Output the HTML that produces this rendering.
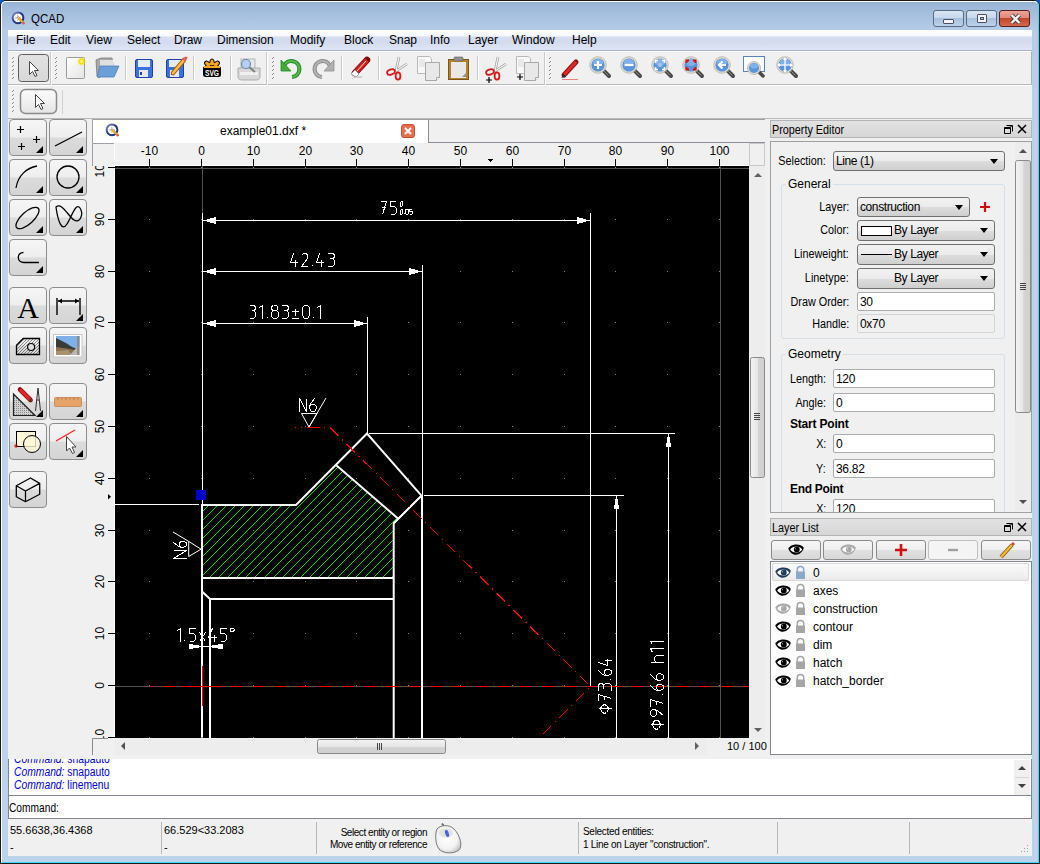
<!DOCTYPE html><html><head><meta charset="utf-8"><style>
*{box-sizing:border-box}
html,body{margin:0;padding:0;width:1040px;height:864px;overflow:hidden;background:#000}
body{font-family:"Liberation Sans",sans-serif;font-size:12px;color:#000;position:relative}
.a{position:absolute}
svg{overflow:hidden}
.menu span{position:absolute;top:3px;font-size:12px}
.btn{position:absolute;width:38px;height:37px;border:1px solid #8c8c8c;border-radius:4px;background:linear-gradient(#f6f6f6 0,#eeeeee 48%,#dcdcdc 52%,#d4d4d4 100%)}
.btn svg{position:absolute;left:0;top:0}
.tri{position:absolute;width:0;height:0;border-left:9px solid transparent;border-bottom:9px solid #000;right:3px;bottom:3px}
.hdl{position:absolute;width:3px;background-image:radial-gradient(circle,#9a9a9a 0.8px,transparent 1.1px);background-size:3px 3px}
.vsep{position:absolute;width:2px;border-left:1px solid #c5c5c5;border-right:1px solid #fff}
.inp{position:absolute;background:#fff;border:1px solid #abadb3;border-radius:2px;font-size:12px;padding:2px 0 0 2px;white-space:nowrap;letter-spacing:-0.3px}
.ro{background:#f0f0f0;border-color:#d4d4d4}
.cmb{position:absolute;border:1px solid #707070;border-radius:3px;background:linear-gradient(#f2f2f2 0,#ebebeb 50%,#dddddd 51%,#cfcfcf 100%);font-size:12px;padding:2px 0 0 2px;white-space:nowrap;letter-spacing:-0.4px}
.cmb:after{content:"";position:absolute;right:6px;top:7px;border-left:4px solid transparent;border-right:4px solid transparent;border-top:5px solid #000}
.lbl{position:absolute;font-size:12px;text-align:right;white-space:nowrap;transform:scaleX(.9);transform-origin:100% 0}
.t11{font-size:11px;white-space:nowrap}
.nw{white-space:nowrap}
.sx{transform-origin:0 0}
.sxr{transform-origin:100% 0}
</style></head><body>
<div class="a" style="left:0;top:0;width:1040px;height:864px;background:#0a5ccc"></div>
<div class="a" style="left:0;top:0;width:1040px;height:864px;border-radius:6px 6px 0 0;border:1px solid #1c1c1c;background:linear-gradient(#97b3d4 0,#a6c0de 14px,#b6cde8 30px,#bcd2ec 120px,#bcd3ec 864px)"></div>
<div class="a" style="left:1px;top:1px;width:1038px;height:862px;border-radius:5px 5px 0 0;border-left:1px solid #fff;border-top:1px solid #fff;border-right:1px solid #3ad8f4;border-bottom:1px solid #3ad8f4"></div>
<svg class="a" style="left:10px;top:10px" width="16" height="16" viewBox="0 0 16 16"><defs><linearGradient id="qr" x1="0" y1="0" x2="1" y2="1"><stop offset="0" stop-color="#8a9cc8"/><stop offset=".45" stop-color="#22388a"/><stop offset="1" stop-color="#1a2e7a"/></linearGradient></defs><circle cx="8" cy="7.8" r="5.4" fill="#fff" stroke="url(#qr)" stroke-width="2"/><path d="M4.5 7.5H11M7.5 4.5V11" stroke="#b0b0b0" stroke-width=".6"/><path d="M5 9.5L9 6" stroke="#e07070" stroke-width=".6"/><path d="M8.5 8L13 12.5" stroke="#c87a10" stroke-width="2.4"/><path d="M8.5 8L12.8 12.3" stroke="#f8c030" stroke-width="1.2"/><circle cx="13.6" cy="13.2" r="1.3" fill="#e05858"/></svg>
<div class="a sx" style="left:31px;top:12px;font-size:12.5px;color:#000;transform:scaleX(.92)">QCAD</div>
<div style="position:absolute;top:10px;height:17px;border:1px solid #5a6a80;border-radius:3px;left:933px;width:31px;background:linear-gradient(#d8e5f3 0,#c7d9ee 45%,#a9c0dd 50%,#bcd2ea 100%)"><div class="a" style="left:9px;top:8px;width:11px;height:5px;background:#f4f4f4;border:1px solid #4a5060;border-radius:1px"></div></div>
<div style="position:absolute;top:10px;height:17px;border:1px solid #5a6a80;border-radius:3px;left:966px;width:31px;background:linear-gradient(#d8e5f3 0,#c7d9ee 45%,#a9c0dd 50%,#bcd2ea 100%)"><div class="a" style="left:10px;top:3px;width:10px;height:9px;background:#f4f4f4;border:1px solid #4a5060;border-radius:1px"></div><div class="a" style="left:13px;top:6px;width:4px;height:3px;background:#a9c0dd;border:1px solid #4a5060"></div></div>
<div style="position:absolute;top:10px;height:17px;border:1px solid #5a6a80;border-radius:3px;left:999px;width:31px;border-color:#5a1e1e;background:linear-gradient(#eba598 0,#e08a78 45%,#c2462c 50%,#d66a4c 100%)"><svg class="a" style="left:9px;top:2px" width="13" height="12" viewBox="0 0 13 12"><path d="M2.5 2L10.5 10M10.5 2L2.5 10" stroke="#3a3a4a" stroke-width="4"/><path d="M2.5 2L10.5 10M10.5 2L2.5 10" stroke="#f4f4f4" stroke-width="2.4"/></svg></div>
<div class="a" style="left:8px;top:30px;width:1024px;height:826px;background:#f0f0f0"></div>
<div class="a menu" style="left:8px;top:30px;width:1024px;height:21px;background:linear-gradient(#ffffff 0,#f7f9fd 28%,#d6ddf0 36%,#d3dbef 60%,#dfe5f4 100%);border-bottom:1px solid #a8b0c4">
<span style="left:8px">File</span>
<span style="left:42px">Edit</span>
<span style="left:78px">View</span>
<span style="left:119px">Select</span>
<span style="left:166px">Draw</span>
<span style="left:209px">Dimension</span>
<span style="left:282px">Modify</span>
<span style="left:336px">Block</span>
<span style="left:381px">Snap</span>
<span style="left:422px">Info</span>
<span style="left:460px">Layer</span>
<span style="left:504px">Window</span>
<span style="left:564px">Help</span>
</div>
<div class="a" style="left:8px;top:51px;width:1024px;height:34px;background:#f0f0f0;border-top:1px solid #fff;border-bottom:1px solid #b8b8b8;border-right:1px solid #b0b0b0"></div>
<div class="a" style="left:8px;top:85px;width:1024px;height:34px;background:#f0f0f0;border-top:1px solid #fff;border-bottom:1px solid #b8b8b8"></div>
<svg class="a" style="left:0;top:51px" width="1040" height="68" viewBox="0 51 1040 68">
<defs><linearGradient id="gpress" x1="0" x2="0" y1="0" y2="1"><stop offset="0" stop-color="#e2e2e2"/><stop offset="1" stop-color="#d8d8d8"/></linearGradient><linearGradient id="gbtn" x1="0" x2="0" y1="0" y2="1"><stop offset="0" stop-color="#fbfbfb"/><stop offset=".5" stop-color="#f1f1f1"/><stop offset="1" stop-color="#e4e4e4"/></linearGradient><linearGradient id="gpage" x1="0" x2="1" y1="0" y2="1"><stop offset="0" stop-color="#ffffff"/><stop offset="1" stop-color="#e4e4e4"/></linearGradient><radialGradient id="gstar"><stop offset="0" stop-color="#ffffa0"/><stop offset=".5" stop-color="#f0e000"/><stop offset="1" stop-color="#f0e000" stop-opacity="0"/></radialGradient></defs>
<path d="M13 57h1v1h-1zM12 58h1v1h-1zM13 61h1v1h-1zM12 62h1v1h-1zM13 65h1v1h-1zM12 66h1v1h-1zM13 69h1v1h-1zM12 70h1v1h-1zM13 73h1v1h-1zM12 74h1v1h-1zM13 77h1v1h-1zM12 78h1v1h-1z" fill="#8a8a8a"/>
<rect x="18.5" y="54.5" width="30" height="27" rx="3" fill="url(#gpress)" stroke="#5e5e5e"/>
<path d="M29.5 61.5V74.5L32.5 71.5L35 76.5L37 75.5L34.5 70.5H38.5Z" fill="#fff" stroke="#444" stroke-width="1"/>
<path d="M50.5 52V85" stroke="#c8c8c8"/><path d="M51.5 52V85" stroke="#fff"/>
<path d="M56 57h1v1h-1zM55 58h1v1h-1zM56 61h1v1h-1zM55 62h1v1h-1zM56 65h1v1h-1zM55 66h1v1h-1zM56 69h1v1h-1zM55 70h1v1h-1zM56 73h1v1h-1zM55 74h1v1h-1zM56 77h1v1h-1zM55 78h1v1h-1z" fill="#8a8a8a"/>
<rect x="66.5" y="57.5" width="18" height="21" rx="1" fill="url(#gpage)" stroke="#9a9a9a"/>
<circle cx="81.5" cy="61.5" r="4.5" fill="url(#gstar)"/>
<path d="M96 60L101 58H112L113 65L99 78L97 76Z" fill="#a8a8a8" stroke="#7a7a7a" stroke-width=".8"/>
<path d="M100 60H113V66H100Z" fill="#e0e0e0"/>
<path d="M100 66H119L114 77H97Z" fill="#6a9fd8" stroke="#4f7fb8" stroke-width=".8"/>
<path d="M125.5 56V80" stroke="#c8c8c8"/><path d="M126.5 56V80" stroke="#fff"/>
<rect x="135.5" y="59.5" width="17" height="18" rx="1.5" fill="#3a73e0" stroke="#1f3fb0"/>
<rect x="138" y="60" width="12" height="7" fill="#e4ecfa"/>
<rect x="139" y="70" width="9" height="7" fill="#e8e8e8"/><rect x="140" y="72" width="2" height="3" fill="#1f3fb0"/>
<rect x="166.5" y="59.5" width="17" height="18" rx="1.5" fill="#3a73e0" stroke="#1f3fb0"/>
<rect x="169" y="60" width="12" height="7" fill="#e4ecfa"/>
<rect x="170" y="70" width="9" height="7" fill="#e8e8e8"/><rect x="171" y="72" width="2" height="3" fill="#1f3fb0"/>
<path d="M173 73L184 60" stroke="#b05a10" stroke-width="4.5" stroke-linecap="round"/><path d="M173 73L184 60" stroke="#f8c040" stroke-width="2.6" stroke-linecap="round"/><path d="M184.5 59.5L186 58" stroke="#e06060" stroke-width="3" stroke-linecap="round"/>
<path d="M193.5 56V80" stroke="#c8c8c8"/><path d="M194.5 56V80" stroke="#fff"/>
<rect x="203" y="66" width="18" height="11" rx="2.5" fill="#000"/>
<g fill="#f5a623" stroke="#000" stroke-width="1"><ellipse cx="207.5" cy="64" rx="2.2" ry="3.4" transform="rotate(-45 207.5 64)"/><ellipse cx="216.5" cy="64" rx="2.2" ry="3.4" transform="rotate(45 216.5 64)"/><ellipse cx="212" cy="62.5" rx="2.2" ry="3.6"/></g>
<path d="M208 65L212 63L216 65" stroke="#f5a623" stroke-width="2" fill="none"/>
<rect x="204" y="66" width="16" height="2" fill="#f5a623"/>
<text x="212" y="76.2" font-family="Liberation Sans" font-weight="bold" font-size="9" fill="#fff" text-anchor="middle" textLength="14" lengthAdjust="spacingAndGlyphs">SVG</text>
<path d="M230.5 56V80" stroke="#c8c8c8"/><path d="M231.5 56V80" stroke="#fff"/>
<rect x="241" y="59" width="14" height="10" fill="#e8e8e8" stroke="#a8a8a8" stroke-width=".8"/>
<path d="M238 68H260V77C260 79 258 80 256 80H242C240 80 238 79 238 77Z" fill="#d8d8d8" stroke="#a0a0a0" stroke-width=".8"/>
<rect x="240" y="72" width="18" height="3" fill="#f0f0f0"/>
<path d="M249 67L255 72" stroke="#808080" stroke-width="2"/>
<circle cx="246" cy="64" r="4.5" fill="#b8d0f0" stroke="#6a8ab0" stroke-width="1.2"/>
<path d="M266.5 52V85" stroke="#c8c8c8"/><path d="M267.5 52V85" stroke="#fff"/>
<path d="M273 57h1v1h-1zM272 58h1v1h-1zM273 61h1v1h-1zM272 62h1v1h-1zM273 65h1v1h-1zM272 66h1v1h-1zM273 69h1v1h-1zM272 70h1v1h-1zM273 73h1v1h-1zM272 74h1v1h-1zM273 77h1v1h-1zM272 78h1v1h-1z" fill="#8a8a8a"/>
<path d="M284 66A8 8 0 1 1 292 77" fill="none" stroke="#1f8a2a" stroke-width="4.2"/>
<path d="M284 66A8 8 0 1 1 292 77" fill="none" stroke="#58b848" stroke-width="2"/>
<path d="M281 60V71H291Z" fill="#48a838" stroke="#1f8a2a" stroke-width=".8"/>
<path d="M330 66A8 8 0 1 0 322 77" fill="none" stroke="#8a8a8a" stroke-width="4.2"/>
<path d="M330 66A8 8 0 1 0 322 77" fill="none" stroke="#b4b4b4" stroke-width="2"/>
<path d="M334 60V71H324Z" fill="#b0b0b0" stroke="#909090" stroke-width=".8"/>
<path d="M341.5 56V80" stroke="#c8c8c8"/><path d="M342.5 56V80" stroke="#fff"/>
<path d="M355 73L367 60" stroke="#7a0a0a" stroke-width="6.5" stroke-linecap="round"/>
<path d="M355 73L367 60" stroke="#d42020" stroke-width="4.8" stroke-linecap="butt"/>
<path d="M357 71L366 61" stroke="#ffd8d8" stroke-width="1"/>
<path d="M351 74L355 70L359 74L356 77Z" fill="#fff" stroke="#8a8a8a" stroke-width=".7"/>
<path d="M354 77H362" stroke="#b0b0b0"/>
<path d="M378.5 56V80" stroke="#c8c8c8"/><path d="M379.5 56V80" stroke="#fff"/>
<path d="M396 71L399 57M396 71L407 64" stroke="#9a9a9a" stroke-width="2.6"/><path d="M396 71L399 57M396 71L407 64" stroke="#f4f4f4" stroke-width="1.2"/><ellipse cx="391" cy="72" rx="4" ry="2.6" fill="none" stroke="#d81818" stroke-width="1.8" transform="rotate(-20 391 72)"/><ellipse cx="398" cy="76" rx="2.4" ry="3.6" fill="none" stroke="#d81818" stroke-width="1.8"/>
<path d="M417.5 56.5H429.5L431.5 58.5V73.5H417.5Z" fill="#f8f8f8" stroke="#b8b8b8"/><path d="M419 60H425M419 62H425M419 64H425M419 66H425" stroke="#c8c8c8" stroke-width=".6"/><path d="M425.5 62.5H439.5V77.5L436.5 80.5H425.5Z" fill="#e8e8e8" stroke="#a8a8a8"/><path d="M436.5 80.5V77.5H439.5" fill="#fff" stroke="#a8a8a8"/>
<rect x="448.5" y="59.5" width="20" height="20" fill="#b8802a" stroke="#7a5418"/>
<rect x="451" y="62" width="15" height="16" fill="#e8e8e8"/>
<rect x="454" y="57" width="9" height="4" rx="1" fill="#909090" stroke="#606060" stroke-width=".6"/>
<path d="M462 77L466 73V77Z" fill="#909090"/>
<path d="M477.5 56V80" stroke="#c8c8c8"/><path d="M478.5 56V80" stroke="#fff"/>
<path d="M495 71L498 57M495 71L506 64" stroke="#9a9a9a" stroke-width="2.6"/><path d="M495 71L498 57M495 71L506 64" stroke="#f4f4f4" stroke-width="1.2"/><ellipse cx="490" cy="72" rx="4" ry="2.6" fill="none" stroke="#d81818" stroke-width="1.8" transform="rotate(-20 490 72)"/><ellipse cx="497" cy="76" rx="2.4" ry="3.6" fill="none" stroke="#d81818" stroke-width="1.8"/><path d="M489 77V83M486 80H492" stroke="#000" stroke-width="1.2"/>
<path d="M516.5 56.5H528.5L530.5 58.5V73.5H516.5Z" fill="#f8f8f8" stroke="#b8b8b8"/><path d="M518 60H524M518 62H524M518 64H524M518 66H524" stroke="#c8c8c8" stroke-width=".6"/><path d="M524.5 62.5H538.5V77.5L535.5 80.5H524.5Z" fill="#e8e8e8" stroke="#a8a8a8"/><path d="M535.5 80.5V77.5H538.5" fill="#fff" stroke="#a8a8a8"/><path d="M520 74V80M517 77H523" stroke="#000" stroke-width="1.2"/>
<path d="M544.5 52V85" stroke="#c8c8c8"/><path d="M545.5 52V85" stroke="#fff"/>
<path d="M550 57h1v1h-1zM549 58h1v1h-1zM550 61h1v1h-1zM549 62h1v1h-1zM550 65h1v1h-1zM549 66h1v1h-1zM550 69h1v1h-1zM549 70h1v1h-1zM550 73h1v1h-1zM549 74h1v1h-1zM550 77h1v1h-1zM549 78h1v1h-1z" fill="#8a8a8a"/>
<path d="M564 75L576 62" stroke="#8a1010" stroke-width="5" stroke-linecap="round"/>
<path d="M564 75L576 62" stroke="#e02828" stroke-width="3.2"/>
<path d="M561.5 78L563 73.5L566 76.5Z" fill="#303030"/>
<path d="M562 79.5H578" stroke="#f08080" stroke-width="1"/>
<path d="M604 71L609 76" stroke="#4a4a4a" stroke-width="4" stroke-linecap="round"/><path d="M604.5 71.5L608 75" stroke="#8a8a8a" stroke-width="1" stroke-linecap="round"/><circle cx="598" cy="65" r="8.3" fill="#dedad0" stroke="#b8b4a8" stroke-width=".8"/><circle cx="598" cy="65" r="6.6" fill="#5a94dc"/><ellipse cx="598" cy="62.5" rx="5" ry="3.5" fill="#8ab8ee" opacity=".8"/><path d="M598 61V69M594 65H602" stroke="#fff" stroke-width="2.2"/>
<path d="M635 71L640 76" stroke="#4a4a4a" stroke-width="4" stroke-linecap="round"/><path d="M635.5 71.5L639 75" stroke="#8a8a8a" stroke-width="1" stroke-linecap="round"/><circle cx="629" cy="65" r="8.3" fill="#dedad0" stroke="#b8b4a8" stroke-width=".8"/><circle cx="629" cy="65" r="6.6" fill="#5a94dc"/><ellipse cx="629" cy="62.5" rx="5" ry="3.5" fill="#8ab8ee" opacity=".8"/><path d="M624.5 65H633.5" stroke="#fff" stroke-width="2.2"/>
<path d="M666 71L671 76" stroke="#4a4a4a" stroke-width="4" stroke-linecap="round"/><path d="M666.5 71.5L670 75" stroke="#8a8a8a" stroke-width="1" stroke-linecap="round"/><circle cx="660" cy="65" r="8.3" fill="#dedad0" stroke="#b8b4a8" stroke-width=".8"/><circle cx="660" cy="65" r="6.6" fill="#5a94dc"/><ellipse cx="660" cy="62.5" rx="5" ry="3.5" fill="#8ab8ee" opacity=".8"/><path d="M655.5 63V60.5H658M662 60.5H664.5V63M664.5 67V69.5H662M658 69.5H655.5V67" stroke="#fff" stroke-width="1.6" fill="none"/><circle cx="660" cy="65" r="2" fill="#a8c8f0"/>
<path d="M697 71L702 76" stroke="#4a4a4a" stroke-width="4" stroke-linecap="round"/><path d="M697.5 71.5L701 75" stroke="#8a8a8a" stroke-width="1" stroke-linecap="round"/><circle cx="691" cy="65" r="8.3" fill="#dedad0" stroke="#b8b4a8" stroke-width=".8"/><circle cx="691" cy="65" r="6.6" fill="#5a94dc"/><ellipse cx="691" cy="62.5" rx="5" ry="3.5" fill="#8ab8ee" opacity=".8"/><path d="M686.5 63V60.5H689M693 60.5H695.5V63M695.5 67V69.5H693M689 69.5H686.5V67" stroke="#d01010" stroke-width="2" fill="none"/>
<path d="M728 71L733 76" stroke="#4a4a4a" stroke-width="4" stroke-linecap="round"/><path d="M728.5 71.5L732 75" stroke="#8a8a8a" stroke-width="1" stroke-linecap="round"/><circle cx="722" cy="65" r="8.3" fill="#dedad0" stroke="#b8b4a8" stroke-width=".8"/><circle cx="722" cy="65" r="6.6" fill="#5a94dc"/><ellipse cx="722" cy="62.5" rx="5" ry="3.5" fill="#8ab8ee" opacity=".8"/><path d="M726 65H719M722.5 61.5L719 65L722.5 68.5" stroke="#fff" stroke-width="2.2" fill="none"/>
<rect x="743.5" y="56.5" width="21" height="15" fill="#fff" stroke="#5a86c0"/>
<path d="M759 72L763 76" stroke="#4a4a4a" stroke-width="3.5" stroke-linecap="round"/><circle cx="754" cy="68" r="6.5" fill="#dedad0" stroke="#b8b4a8" stroke-width=".8"/><circle cx="754" cy="68" r="5" fill="#5a94dc"/><ellipse cx="754" cy="66" rx="3.8" ry="2.5" fill="#8ab8ee" opacity=".8"/>
<path d="M791 71L796 76" stroke="#4a4a4a" stroke-width="4" stroke-linecap="round"/><path d="M791.5 71.5L795 75" stroke="#8a8a8a" stroke-width="1" stroke-linecap="round"/><circle cx="785" cy="65" r="8.3" fill="#dedad0" stroke="#b8b4a8" stroke-width=".8"/><circle cx="785" cy="65" r="6.6" fill="#5a94dc"/><ellipse cx="785" cy="62.5" rx="5" ry="3.5" fill="#8ab8ee" opacity=".8"/><path d="M785 58V72M778 65H792" stroke="#e8f0ff" stroke-width="1.6"/><path d="M785 57.5L783 60H787ZM785 72.5L783 70H787ZM777.5 65L780 63V67ZM792.5 65L790 63V67Z" fill="#fff"/>
<path d="M13 90h1v1h-1zM12 91h1v1h-1zM13 94h1v1h-1zM12 95h1v1h-1zM13 98h1v1h-1zM12 99h1v1h-1zM13 102h1v1h-1zM12 103h1v1h-1zM13 106h1v1h-1zM12 107h1v1h-1zM13 110h1v1h-1zM12 111h1v1h-1z" fill="#8a8a8a"/>
<rect x="20.5" y="89.5" width="36" height="24" rx="5" fill="url(#gbtn)" stroke="#8a8a8a" stroke-width="1.5"/>
<path d="M35.5 94.5V107.5L38.5 104.5L41 109.5L43 108.5L40.5 103.5H44.5Z" fill="#fff" stroke="#444" stroke-width="1"/>
<path d="M62.5 90V114" stroke="#d0d0d0"/>
</svg>
<div class="a" style="left:8px;top:119px;width:84px;height:637px;background:#f0f0f0"></div>
<div class="btn" style="left:9px;top:119px"></div>
<div class="btn" style="left:49px;top:119px"></div>
<div class="btn" style="left:9px;top:159px"></div>
<div class="btn" style="left:49px;top:159px"></div>
<div class="btn" style="left:9px;top:199px"></div>
<div class="btn" style="left:49px;top:199px"></div>
<div class="btn" style="left:9px;top:239px"></div>
<div class="btn" style="left:9px;top:287px"></div>
<div class="btn" style="left:49px;top:287px"></div>
<div class="btn" style="left:9px;top:327px"></div>
<div class="btn" style="left:49px;top:327px"></div>
<div class="btn" style="left:9px;top:383px"></div>
<div class="btn" style="left:49px;top:383px"></div>
<div class="btn" style="left:9px;top:423px"></div>
<div class="btn" style="left:49px;top:423px"></div>
<div class="btn" style="left:9px;top:471px"></div>
<svg class="a" style="left:0;top:119px" width="92" height="400" viewBox="0 119 92 400">
<path d="M43 146V153H36Z" fill="#000"/>
<path d="M83 146V153H76Z" fill="#000"/>
<path d="M43 186V193H36Z" fill="#000"/>
<path d="M83 186V193H76Z" fill="#000"/>
<path d="M43 226V233H36Z" fill="#000"/>
<path d="M83 226V233H76Z" fill="#000"/>
<path d="M43 266V273H36Z" fill="#000"/>
<path d="M83 314V321H76Z" fill="#000"/>
<path d="M43 410V417H36Z" fill="#000"/>
<path d="M83 410V417H76Z" fill="#000"/>
<path d="M83 450V457H76Z" fill="#000"/>
<g fill="none" stroke="#000" stroke-width="1.3">
<path d="M20.5 126V133M17 129.5H24M36.5 136V143M33 139.5H40M21.5 143V150M18 146.5H25" stroke-width="1.2"/>
<path d="M55 146L82 132"/>
<path d="M16 188C18 175 27 168 37 166"/>
<circle cx="68" cy="177" r="11"/>
<ellipse cx="27.5" cy="218" rx="14.5" ry="6" transform="rotate(-42 27.5 218)"/>
<path d="M56 207C58 222 62 232 67 224C72 216 76 202 80 208C84 214 80 224 74 220C68 216 62 202 56 207Z"/>
<path d="M23.5 252.5C16.5 252.5 16.5 262.5 24 262.5H39"/>
</g>
<text x="28" y="318" font-family="Liberation Serif" font-size="30" text-anchor="middle" fill="#000">A</text>
<path d="M57 298V315M80 298V315M58 301H79" stroke="#000" stroke-width="1.4" fill="none"/><path d="M58 301L62 298.5V303.5ZM79 301L75 298.5V303.5Z" fill="#000"/>
<defs><clipPath id="hcl"><path d="M16 354.5V345.2L23.2 338.4H39.7V354.5Z"/></clipPath></defs>
<path clip-path="url(#hcl)" d="M-4 358L20 334M-1 358L23 334M2 358L26 334M5 358L29 334M8 358L32 334M11 358L35 334M14 358L38 334M17 358L41 334M20 358L44 334M23 358L47 334M26 358L50 334M29 358L53 334M32 358L56 334M35 358L59 334M38 358L62 334M41 358L65 334" stroke="#333" stroke-width=".55"/>
<path d="M16.5 354.5V345.2L23.2 338.5H39.5V354.5Z" fill="none" stroke="#000" stroke-width="1.3"/>
<circle cx="31.1" cy="347" r="3.5" fill="#e0e0e0" stroke="#000" stroke-width="1.2"/>
<rect x="53.5" y="334.5" width="28.5" height="22.5" fill="#fff" stroke="#c8c8c8"/>
<rect x="56" y="336" width="24" height="19" fill="#7fb0e8"/>
<path d="M56 338L66 343L72 347L80 350V355H56Z" fill="#3a3a38"/>
<path d="M56 347L70 349L80 351V355H56Z" fill="#8a7050"/>
<path d="M56 351L68 350L72 355H56Z" fill="#a89070"/>
<path d="M70 355L77 347L80 347V355Z" fill="#b8b8b8"/>
<rect x="77" y="336" width="2" height="19" fill="#9a8a78"/>
<defs><pattern id="dots" width="2" height="2" patternUnits="userSpaceOnUse"><rect width="2" height="2" fill="#d0d0d0"/><rect width="1" height="1" fill="#888"/></pattern></defs>
<path d="M13.5 394V415.5H35Z" fill="url(#dots)" stroke="#222" stroke-width="1.2"/>
<path d="M20 389.5L30.5 400" stroke="#8a1010" stroke-width="4.6" stroke-linecap="round"/><path d="M20 389.5L30 399.5" stroke="#e02424" stroke-width="3.2"/><path d="M30 399L32 401.5" stroke="#604020" stroke-width="2"/>
<path d="M38 388L35.5 411M38 388L40.5 411M36.5 400H39.5" stroke="#303030" stroke-width="1" fill="none"/>
<rect x="54.5" y="397.5" width="27" height="9" rx="1" fill="#e8a468" stroke="#c08048" stroke-width=".8"/>
<path d="M58 398V400M62 398V399.5M66 398V400M70 398V399.5M74 398V400M78 398V399.5" stroke="#9a6a38" stroke-width=".8"/>
<rect x="16.5" y="431.5" width="19" height="15" fill="#fff8d8" stroke="#000" stroke-width="1"/>
<circle cx="32" cy="444" r="8.5" fill="#fff8d8" fill-opacity=".8" stroke="#000" stroke-width="1"/>
<path d="M14 446H18M16 444V448" stroke="#e00000" stroke-width="1"/>
<path d="M56 441L75 430" stroke="#ff2020" stroke-width="1.3"/>
<path d="M66.5 436.5V451L69.5 448L72.5 453.5L74.5 452.5L72 447H76Z" fill="#fff" stroke="#444" stroke-width="1"/>
<path d="M30.5 478L39.7 483.4V494.2L25.5 501.7L16.3 496.7V485.8ZM16.3 485.8L25.5 491L39.7 483.4M25.5 491V501.7" fill="none" stroke="#000" stroke-width="1.3" stroke-linejoin="round"/>
</svg>
<div class="a" style="left:92px;top:119px;width:673px;height:636px;background:#f0f0f0;border-top:1px solid #a0a0a0;border-left:1px solid #a0a0b0"></div>
<div class="a" style="left:92px;top:120px;width:337px;height:23px;background:#fff;border-right:1px solid #8a8f99;border-left:1px solid #a0a0b0"></div>
<div class="a" style="left:429px;top:142px;width:336px;height:1px;background:#8a8f99"></div>
<svg class="a" style="left:104px;top:122px" width="16" height="16" viewBox="0 0 16 16"><defs><linearGradient id="qr2" x1="0" y1="0" x2="1" y2="1"><stop offset="0" stop-color="#8a9cc8"/><stop offset=".45" stop-color="#22388a"/><stop offset="1" stop-color="#1a2e7a"/></linearGradient></defs><circle cx="8" cy="7.8" r="5.4" fill="#fff" stroke="url(#qr2)" stroke-width="2"/><path d="M4.5 7.5H11M7.5 4.5V11" stroke="#b0b0b0" stroke-width=".6"/><path d="M5 9.5L9 6" stroke="#e07070" stroke-width=".6"/><path d="M8.5 8L13 12.5" stroke="#c87a10" stroke-width="2.4"/><path d="M8.5 8L12.8 12.3" stroke="#f8c030" stroke-width="1.2"/><circle cx="13.6" cy="13.2" r="1.3" fill="#e05858"/></svg>
<div class="a nw" style="left:220px;top:124px;font-size:12px">example01.dxf *</div>
<div class="a" style="left:401px;top:124px;width:14px;height:14px;border-radius:3px;background:#e3714f;border:1px solid #c8502f"><svg class="a" style="left:1px;top:1px" width="10" height="10" viewBox="0 0 10 10"><path d="M2 2L8 8M8 2L2 8" stroke="#fff" stroke-width="2"/></svg></div>
<svg class="a" style="left:92px;top:143px" width="673" height="612" viewBox="92 143 673 612">
<rect x="92" y="143" width="673" height="612" fill="#f0f0f0"/>
<path d="M92.5 166V143.5H114" stroke="#a0a0a8" fill="none"/>
<path d="M114.5 144V166" stroke="#fff" fill="none"/>
<defs><clipPath id="vrc"><rect x="92" y="166" width="23" height="572"/></clipPath><clipPath id="hrc"><rect x="115" y="143" width="634" height="23"/></clipPath></defs>
<g font-family="Liberation Sans" font-size="12" text-anchor="middle" fill="#000" clip-path="url(#hrc)">
<text x="149.5" y="155">-10</text>
<text x="201.5" y="155">0</text>
<text x="253.5" y="155">10</text>
<text x="305.5" y="155">20</text>
<text x="356.5" y="155">30</text>
<text x="408.5" y="155">40</text>
<text x="460.5" y="155">50</text>
<text x="512.5" y="155">60</text>
<text x="564.5" y="155">70</text>
<text x="615.5" y="155">80</text>
<text x="667.5" y="155">90</text>
<text x="719.5" y="155">100</text>
</g>
<g font-family="Liberation Sans" font-size="12" text-anchor="middle" fill="#000" clip-path="url(#vrc)">
<text transform="translate(104,737.5) rotate(-90)" x="0" y="0">-10</text>
<text transform="translate(104,685.5) rotate(-90)" x="0" y="0">0</text>
<text transform="translate(104,633.5) rotate(-90)" x="0" y="0">10</text>
<text transform="translate(104,581.5) rotate(-90)" x="0" y="0">20</text>
<text transform="translate(104,530.5) rotate(-90)" x="0" y="0">30</text>
<text transform="translate(104,478.5) rotate(-90)" x="0" y="0">40</text>
<text transform="translate(104,426.5) rotate(-90)" x="0" y="0">50</text>
<text transform="translate(104,374.5) rotate(-90)" x="0" y="0">60</text>
<text transform="translate(104,322.5) rotate(-90)" x="0" y="0">70</text>
<text transform="translate(104,271.5) rotate(-90)" x="0" y="0">80</text>
<text transform="translate(104,219.5) rotate(-90)" x="0" y="0">90</text>
<text transform="translate(104,167.5) rotate(-90)" x="0" y="0">100</text>
</g>
<rect x="115" y="165" width="634" height="1" fill="#fff"/>
<rect x="114" y="166" width="1" height="572" fill="#fff"/>
<path d="M149.5 159V167M201.5 159V167M253.5 159V167M305.5 159V167M356.5 159V167M408.5 159V167M460.5 159V167M512.5 159V167M564.5 159V167M615.5 159V167M667.5 159V167M719.5 159V167M108 737.5H116M108 685.5H116M108 633.5H116M108 581.5H116M108 530.5H116M108 478.5H116M108 426.5H116M108 374.5H116M108 322.5H116M108 271.5H116M108 219.5H116M108 167.5H116" stroke="#000" stroke-width="1" fill="none" shape-rendering="crispEdges"/>
<path d="M487 159H493L490 162Z" fill="#000" shape-rendering="crispEdges"/>
<path d="M108 494V499.5L111 496.7Z" fill="#000"/>
<rect x="749.5" y="143.5" width="15" height="22" fill="#f0f0f0" stroke="#c8c8c8"/>
<rect x="749" y="166" width="16" height="572" fill="#ededed"/>
<path d="M754 177H762L758 173Z" fill="#606060"/>
<path d="M754 728H762L758 732Z" fill="#606060"/>
<defs><linearGradient id="vth" x1="0" x2="1"><stop offset="0" stop-color="#f4f4f4"/><stop offset=".5" stop-color="#e6e6e6"/><stop offset=".55" stop-color="#d4d4d4"/><stop offset="1" stop-color="#cfcfcf"/></linearGradient>
<linearGradient id="hth" x1="0" x2="0" y1="0" y2="1"><stop offset="0" stop-color="#f4f4f4"/><stop offset=".5" stop-color="#e6e6e6"/><stop offset=".55" stop-color="#d4d4d4"/><stop offset="1" stop-color="#cfcfcf"/></linearGradient></defs>
<rect x="750.5" y="357.5" width="14" height="120" rx="2" fill="url(#vth)" stroke="#8a8a8a"/>
<path d="M754 413.5H760M754 415.5H760M754 417.5H760M754 419.5H760" stroke="#444" stroke-width="1"/>
<rect x="92" y="738" width="614" height="17" fill="#ededed"/>
<rect x="92" y="738" width="23" height="17" fill="#f0f0f0"/><path d="M92.5 755V738.5H108" stroke="#8a8a8a" fill="none"/>
<path d="M125 742V750L121 746Z" fill="#505050"/>
<path d="M695 742V750L699 746Z" fill="#606060"/>
<rect x="317.5" y="739.5" width="128" height="14" rx="2" fill="url(#hth)" stroke="#8a8a8a"/>
<path d="M377.5 743V750M379.5 743V750M381.5 743V750" stroke="#444" stroke-width="1"/>
</svg>
<svg class="a" style="left:115px;top:166px" width="634" height="572" viewBox="115 166 634 572">
<rect x="115" y="166" width="634" height="572" fill="#000"/>
<path d="M149 737h1v1h-1zM149 685h1v1h-1zM149 633h1v1h-1zM149 581h1v1h-1zM149 530h1v1h-1zM149 478h1v1h-1zM149 426h1v1h-1zM149 374h1v1h-1zM149 322h1v1h-1zM149 271h1v1h-1zM149 219h1v1h-1zM149 167h1v1h-1zM201 737h1v1h-1zM201 685h1v1h-1zM201 633h1v1h-1zM201 581h1v1h-1zM201 530h1v1h-1zM201 478h1v1h-1zM201 426h1v1h-1zM201 374h1v1h-1zM201 322h1v1h-1zM201 271h1v1h-1zM201 219h1v1h-1zM201 167h1v1h-1zM253 737h1v1h-1zM253 685h1v1h-1zM253 633h1v1h-1zM253 581h1v1h-1zM253 530h1v1h-1zM253 478h1v1h-1zM253 426h1v1h-1zM253 374h1v1h-1zM253 322h1v1h-1zM253 271h1v1h-1zM253 219h1v1h-1zM253 167h1v1h-1zM305 737h1v1h-1zM305 685h1v1h-1zM305 633h1v1h-1zM305 581h1v1h-1zM305 530h1v1h-1zM305 478h1v1h-1zM305 426h1v1h-1zM305 374h1v1h-1zM305 322h1v1h-1zM305 271h1v1h-1zM305 219h1v1h-1zM305 167h1v1h-1zM356 737h1v1h-1zM356 685h1v1h-1zM356 633h1v1h-1zM356 581h1v1h-1zM356 530h1v1h-1zM356 478h1v1h-1zM356 426h1v1h-1zM356 374h1v1h-1zM356 322h1v1h-1zM356 271h1v1h-1zM356 219h1v1h-1zM356 167h1v1h-1zM408 737h1v1h-1zM408 685h1v1h-1zM408 633h1v1h-1zM408 581h1v1h-1zM408 530h1v1h-1zM408 478h1v1h-1zM408 426h1v1h-1zM408 374h1v1h-1zM408 322h1v1h-1zM408 271h1v1h-1zM408 219h1v1h-1zM408 167h1v1h-1zM460 737h1v1h-1zM460 685h1v1h-1zM460 633h1v1h-1zM460 581h1v1h-1zM460 530h1v1h-1zM460 478h1v1h-1zM460 426h1v1h-1zM460 374h1v1h-1zM460 322h1v1h-1zM460 271h1v1h-1zM460 219h1v1h-1zM460 167h1v1h-1zM512 737h1v1h-1zM512 685h1v1h-1zM512 633h1v1h-1zM512 581h1v1h-1zM512 530h1v1h-1zM512 478h1v1h-1zM512 426h1v1h-1zM512 374h1v1h-1zM512 322h1v1h-1zM512 271h1v1h-1zM512 219h1v1h-1zM512 167h1v1h-1zM564 737h1v1h-1zM564 685h1v1h-1zM564 633h1v1h-1zM564 581h1v1h-1zM564 530h1v1h-1zM564 478h1v1h-1zM564 426h1v1h-1zM564 374h1v1h-1zM564 322h1v1h-1zM564 271h1v1h-1zM564 219h1v1h-1zM564 167h1v1h-1zM615 737h1v1h-1zM615 685h1v1h-1zM615 633h1v1h-1zM615 581h1v1h-1zM615 530h1v1h-1zM615 478h1v1h-1zM615 426h1v1h-1zM615 374h1v1h-1zM615 322h1v1h-1zM615 271h1v1h-1zM615 219h1v1h-1zM615 167h1v1h-1zM667 737h1v1h-1zM667 685h1v1h-1zM667 633h1v1h-1zM667 581h1v1h-1zM667 530h1v1h-1zM667 478h1v1h-1zM667 426h1v1h-1zM667 374h1v1h-1zM667 322h1v1h-1zM667 271h1v1h-1zM667 219h1v1h-1zM667 167h1v1h-1zM719 737h1v1h-1zM719 685h1v1h-1zM719 633h1v1h-1zM719 581h1v1h-1zM719 530h1v1h-1zM719 478h1v1h-1zM719 426h1v1h-1zM719 374h1v1h-1zM719 322h1v1h-1zM719 271h1v1h-1zM719 219h1v1h-1zM719 167h1v1h-1z" fill="#808080"/>
<path d="M202.5 166V738M720.5 166V738M115 686.5H749M115 168.5H749" stroke="#505050" stroke-width="1" fill="none" shape-rendering="crispEdges"/>
<defs><clipPath id="hc"><polygon points="203,505.5 296,505.5 336,465.5 398,519 393,523.5 393,577 203,577"/></clipPath></defs>
<path clip-path="url(#hc)" d="M-554.00 720L-214.00 380M-545.00 720L-205.00 380M-536.00 720L-196.00 380M-527.00 720L-187.00 380M-518.00 720L-178.00 380M-508.00 720L-168.00 380M-499.00 720L-159.00 380M-490.00 720L-150.00 380M-481.00 720L-141.00 380M-472.00 720L-132.00 380M-463.00 720L-123.00 380M-454.00 720L-114.00 380M-445.00 720L-105.00 380M-435.00 720L-95.00 380M-426.00 720L-86.00 380M-417.00 720L-77.00 380M-408.00 720L-68.00 380M-399.00 720L-59.00 380M-390.00 720L-50.00 380M-381.00 720L-41.00 380M-372.00 720L-32.00 380M-362.00 720L-22.00 380M-353.00 720L-13.00 380M-344.00 720L-4.00 380M-335.00 720L5.00 380M-326.00 720L14.00 380M-317.00 720L23.00 380M-308.00 720L32.00 380M-298.00 720L42.00 380M-289.00 720L51.00 380M-280.00 720L60.00 380M-271.00 720L69.00 380M-262.00 720L78.00 380M-253.00 720L87.00 380M-244.00 720L96.00 380M-235.00 720L105.00 380M-225.00 720L115.00 380M-216.00 720L124.00 380M-207.00 720L133.00 380M-198.00 720L142.00 380M-189.00 720L151.00 380M-180.00 720L160.00 380M-171.00 720L169.00 380M-162.00 720L178.00 380M-152.00 720L188.00 380M-143.00 720L197.00 380M-134.00 720L206.00 380M-125.00 720L215.00 380M-116.00 720L224.00 380M-107.00 720L233.00 380M-98.00 720L242.00 380M-88.00 720L252.00 380M-79.00 720L261.00 380M-70.00 720L270.00 380M-61.00 720L279.00 380M-52.00 720L288.00 380M-43.00 720L297.00 380M-34.00 720L306.00 380M-25.00 720L315.00 380M-15.00 720L325.00 380M-6.00 720L334.00 380M3.00 720L343.00 380M12.00 720L352.00 380M21.00 720L361.00 380M30.00 720L370.00 380M39.00 720L379.00 380M48.00 720L388.00 380M58.00 720L398.00 380M67.00 720L407.00 380M76.00 720L416.00 380M85.00 720L425.00 380M94.00 720L434.00 380M103.00 720L443.00 380M112.00 720L452.00 380M122.00 720L462.00 380M131.00 720L471.00 380M140.00 720L480.00 380M149.00 720L489.00 380M158.00 720L498.00 380M167.00 720L507.00 380M176.00 720L516.00 380M185.00 720L525.00 380M195.00 720L535.00 380M204.00 720L544.00 380M213.00 720L553.00 380M222.00 720L562.00 380M231.00 720L571.00 380M240.00 720L580.00 380M249.00 720L589.00 380M258.00 720L598.00 380M268.00 720L608.00 380M277.00 720L617.00 380M286.00 720L626.00 380M295.00 720L635.00 380M304.00 720L644.00 380M313.00 720L653.00 380M322.00 720L662.00 380M332.00 720L672.00 380M341.00 720L681.00 380M350.00 720L690.00 380M359.00 720L699.00 380M368.00 720L708.00 380M377.00 720L717.00 380M386.00 720L726.00 380M395.00 720L735.00 380M405.00 720L745.00 380M414.00 720L754.00 380M423.00 720L763.00 380M432.00 720L772.00 380M441.00 720L781.00 380M450.00 720L790.00 380M459.00 720L799.00 380M468.00 720L808.00 380M478.00 720L818.00 380M487.00 720L827.00 380M496.00 720L836.00 380M505.00 720L845.00 380M514.00 720L854.00 380M523.00 720L863.00 380M532.00 720L872.00 380" stroke="#00e000" stroke-width="1" fill="none" shape-rendering="crispEdges"/>
<g stroke="#fff" fill="none" stroke-width="1" shape-rendering="crispEdges">
<path d="M202.5 213V505M203 220.5H590M590.5 213V686"/>
<path d="M203 271.5H422M422.5 265V496"/>
<path d="M203 323.5H367M367.5 317V434"/>
<path d="M369 433.5H675M668.5 434V738"/>
<path d="M424 495.5H624M616.5 496V738"/>
<path d="M115 504.5H199"/>
<path d="M189 646.5H223"/>
</g>
<g fill="#fff" shape-rendering="crispEdges">
<polygon points="203,220.5 216,217.0 216,224.0"/>
<polygon points="590,220.5 577,217.0 577,224.0"/>
<polygon points="203,271.5 216,268.0 216,275.0"/>
<polygon points="422,271.5 409,268.0 409,275.0"/>
<polygon points="203,323.5 216,320.0 216,327.0"/>
<polygon points="367,323.5 354,320.0 354,327.0"/>
<rect x="667.0" y="437" width="3" height="6"/><rect x="666.0" y="443" width="5" height="4"/>
<rect x="615.0" y="499" width="3" height="6"/><rect x="614.0" y="505" width="5" height="4"/>
<rect x="189" y="644" width="4" height="5"/><rect x="193" y="645" width="6" height="3"/><rect x="212" y="645" width="6" height="3"/><rect x="218" y="644" width="5" height="5"/>
</g>
<g stroke="#fff" fill="none" stroke-width="2" stroke-linejoin="miter">
<path d="M202 737.5V505H296L367 433.5L421.5 495.6L393.7 523.4V738"/>
<path d="M336 465L398 518.5"/>
<path d="M422 495.6V738"/>
<path d="M202 578H394M202 591.5L210 599H394M210 599V738"/>
</g>
<path d="M421.5 495.6L393.7 523.4" stroke="#fff" stroke-width="1.5"/>
<g stroke="#ff0000" fill="none" stroke-width="1">
<path d="M150 686.5H749" stroke-dasharray="12.3 5 1 4" stroke-dashoffset="9" shape-rendering="crispEdges"/>
<path d="M202.5 666V706M182 686.5H222" shape-rendering="crispEdges"/>
<path d="M295 427.5H330" stroke-dasharray="1 5 1 5 13 4 1 100" shape-rendering="crispEdges"/>
<path d="M330 427.5L590.5 686.5L539.5 737.5" stroke-dasharray="12 5 1.5 5" stroke-width="1" shape-rendering="crispEdges"/>
</g>
<g stroke="#fff" fill="none" stroke-width="1">
<path d="M301.5 413.5H317L309 427L301.5 413.5M309 427L326 398"/>
<path d="M201 549.2L188.7 541.4V556.5L201 549.2M188.7 541.4L173 532"/>
</g>
<g shape-rendering="crispEdges">
<path d="M380.5 201.5L386.5 201.5L382.5 214.5M381.5 207.5L385.5 207.5M395.5 201.5L390.5 201.5L390.5 206.5L394.5 206.5L396.5 208.5L396.5 212.5L394.5 214.5L390.5 214.5" fill="none" stroke="#fff" stroke-width="1" stroke-linejoin="miter"/>
<path d="M400.5 201.5L401.5 201.5L402.5 201.5L402.5 205.5L401.5 206.5L400.5 206.5L400.5 205.5L400.5 201.5L400.5 201.5" fill="none" stroke="#fff" stroke-width="1" stroke-linejoin="miter"/>
<path d="M400.5 209.5L401.5 209.5L402.5 209.5L402.5 213.5L401.5 214.5L400.5 214.5L400.5 213.5L400.5 209.5L400.5 209.5M406.5 209.5L407.5 209.5L408.5 209.5L408.5 213.5L407.5 214.5L406.5 214.5L405.5 213.5L405.5 209.5L406.5 209.5M411.5 209.5L409.5 209.5L409.5 211.5L411.5 211.5L412.5 211.5L412.5 213.5L411.5 214.5L409.5 214.5" fill="none" stroke="#fff" stroke-width="1" stroke-linejoin="miter"/><path d="M404.0 213.0h1v1h-1z" fill="#fff"/>
<path d="M293.5 253.5L290.5 262.5L297.5 262.5M295.5 259.5L295.5 266.5M301.5 255.5L303.5 253.5L306.5 253.5L307.5 255.5L307.5 258.5L301.5 266.5L307.5 266.5M319.5 253.5L316.5 262.5L323.5 262.5M321.5 259.5L321.5 266.5M327.5 253.5L332.5 253.5L334.5 254.5L334.5 257.5L332.5 258.5L329.5 258.5M332.5 258.5L334.5 260.5L334.5 264.5L332.5 266.5L327.5 266.5" fill="none" stroke="#fff" stroke-width="1" stroke-linejoin="miter"/><path d="M312.0 265.0h1v1h-1z" fill="#fff"/>
<path d="M249.5 305.5L253.5 305.5L255.5 306.5L255.5 309.5L253.5 310.5L251.5 310.5M253.5 310.5L255.5 312.5L255.5 316.5L253.5 318.5L249.5 318.5M259.5 307.5L262.5 305.5L262.5 318.5M273.5 305.5L276.5 305.5L277.5 306.5L277.5 309.5L276.5 310.5L273.5 310.5L271.5 309.5L271.5 306.5L273.5 305.5M273.5 310.5L271.5 312.5L271.5 316.5L273.5 318.5L276.5 318.5L278.5 316.5L278.5 312.5L276.5 310.5M281.5 305.5L286.5 305.5L288.5 306.5L288.5 309.5L286.5 310.5L283.5 310.5M286.5 310.5L288.5 312.5L288.5 316.5L286.5 318.5L281.5 318.5M295.5 308.5L295.5 315.5M291.5 311.5L298.5 311.5M291.5 318.5L298.5 318.5M304.5 305.5L307.5 305.5L309.5 307.5L309.5 315.5L307.5 318.5L304.5 318.5L302.5 315.5L302.5 307.5L304.5 305.5M317.5 307.5L320.5 305.5L320.5 318.5" fill="none" stroke="#fff" stroke-width="1" stroke-linejoin="miter"/><path d="M267.0 317.0h1v1h-1zM313.0 317.0h1v1h-1z" fill="#fff"/>
<path d="M299.5 411.5L299.5 398.5L306.5 411.5L306.5 398.5M314.5 398.5L311.5 402.5L309.5 405.5L309.5 408.5L311.5 411.5L314.5 411.5L316.5 408.5L316.5 406.5L314.5 404.5L311.5 404.5L309.5 406.5" fill="none" stroke="#fff" stroke-width="1" stroke-linejoin="miter"/>
<path d="M177.5 630.5L180.5 628.5L180.5 641.5M195.5 628.5L189.5 628.5L189.5 633.5L193.5 633.5L195.5 635.5L195.5 639.5L193.5 641.5L189.5 641.5M199.5 632.5L205.5 641.5M205.5 632.5L199.5 641.5M212.5 628.5L208.5 637.5L216.5 637.5M214.5 634.5L214.5 641.5M226.5 628.5L220.5 628.5L220.5 633.5L224.5 633.5L226.5 635.5L226.5 639.5L224.5 641.5L220.5 641.5M232.5 628.5L233.5 628.5L234.5 629.5L233.5 631.5L232.5 631.5L230.5 631.5L230.5 629.5L230.5 628.5L232.5 628.5" fill="none" stroke="#fff" stroke-width="1" stroke-linejoin="miter"/><path d="M184.0 640.0h1v1h-1z" fill="#fff"/>
<path d="M186.5 558.5L173.5 558.5L186.5 550.5L173.5 550.5M173.5 542.5L177.5 545.5L180.5 547.5L183.5 547.5L186.5 545.5L186.5 542.5L183.5 541.5L181.5 541.5L179.5 542.5L179.5 545.5L181.5 547.5" fill="none" stroke="#fff" stroke-width="1" stroke-linejoin="miter"/>
<path d="M598.5 708.5L611.5 708.5M600.5 708.5L601.5 706.5L602.5 705.5L604.5 704.5L606.5 705.5L607.5 706.5L608.5 708.5L607.5 711.5L606.5 712.5L604.5 713.5L602.5 712.5L601.5 711.5L600.5 708.5M598.5 700.5L598.5 694.5L611.5 698.5M604.5 699.5L604.5 695.5M598.5 690.5L598.5 685.5L599.5 683.5L602.5 683.5L603.5 685.5L603.5 688.5M603.5 685.5L605.5 683.5L609.5 683.5L611.5 685.5L611.5 690.5M598.5 670.5L602.5 674.5L605.5 675.5L608.5 675.5L611.5 673.5L611.5 670.5L608.5 669.5L606.5 669.5L604.5 670.5L604.5 673.5L606.5 675.5M598.5 662.5L607.5 665.5L607.5 658.5M604.5 660.5L611.5 660.5" fill="none" stroke="#fff" stroke-width="1" stroke-linejoin="miter"/><path d="M610.0 679.0h1v1h-1z" fill="#fff"/>
<path d="M650.5 724.5L663.5 724.5M652.5 724.5L653.5 722.5L654.5 720.5L656.5 720.5L658.5 720.5L659.5 722.5L660.5 724.5L659.5 727.5L658.5 728.5L656.5 729.5L654.5 728.5L653.5 727.5L652.5 724.5M663.5 715.5L658.5 711.5L655.5 709.5L652.5 709.5L650.5 711.5L650.5 714.5L652.5 716.5L654.5 716.5L656.5 714.5L656.5 711.5L654.5 709.5M650.5 706.5L650.5 699.5L663.5 703.5M656.5 704.5L656.5 700.5M650.5 685.5L654.5 689.5L657.5 690.5L660.5 690.5L663.5 688.5L663.5 685.5L660.5 684.5L658.5 684.5L656.5 685.5L656.5 688.5L658.5 690.5M650.5 674.5L654.5 678.5L657.5 680.5L660.5 680.5L663.5 678.5L663.5 675.5L660.5 673.5L658.5 673.5L656.5 675.5L656.5 678.5L658.5 680.5M650.5 662.5L663.5 662.5M656.5 662.5L654.5 660.5L654.5 657.5L656.5 655.5L663.5 655.5M652.5 652.5L650.5 648.5L663.5 648.5M652.5 644.5L650.5 641.5L663.5 641.5" fill="none" stroke="#fff" stroke-width="1" stroke-linejoin="miter"/><path d="M662.0 694.0h1v1h-1z" fill="#fff"/>
</g>
<rect x="196" y="490" width="10" height="10" fill="#0000c8"/>
</svg>
<div class="a nw" style="left:727px;top:740px;font-size:11px">10 / 100</div>
<div class="a" style="left:770px;top:120px;width:262px;height:18px;background:linear-gradient(#e2e2e2,#d6d6d6);border:1px solid #b4b4b4"></div><div class="a t11 sx" style="left:772px;top:123px;font-size:12px;transform:scaleX(.9)">Property Editor</div><svg class="a" style="left:1001px;top:123px" width="30" height="12" viewBox="0 0 30 12"><path d="M3.5 4.5h6v6h-6zM5.5 2.5h6v6" fill="none" stroke="#000"/><path d="M3.5 4.5h6v1.5h-6zM5.5 2.5h6v1.5" fill="#000"/><path d="M17 2L25 10M25 2L17 10" stroke="#000" stroke-width="1.5"/></svg>
<div class="a" style="left:770px;top:141px;width:262px;height:372px;background:#f0f0f0;border:1px solid #a0a0a0"></div>
<div class="a" style="left:1015px;top:142px;width:16px;height:369px;background:#ececec"></div>
<svg class="a" style="left:1015px;top:142px" width="16" height="369" viewBox="0 0 16 369"><path d="M4 11H12L8 7Z" fill="#505050"/><path d="M4 358H12L8 362Z" fill="#505050"/><defs><linearGradient id="pth" x1="0" x2="1"><stop offset="0" stop-color="#f4f4f4"/><stop offset=".5" stop-color="#e6e6e6"/><stop offset=".55" stop-color="#d4d4d4"/><stop offset="1" stop-color="#cfcfcf"/></linearGradient></defs><rect x=".5" y="18.5" width="15" height="252" rx="2" fill="url(#pth)" stroke="#8a8a8a"/><path d="M5 141.5H11M5 143.5H11M5 145.5H11M5 147.5H11" stroke="#444"/></svg>
<div class="lbl" style="right:214px;top:154px">Selection:</div>
<div class="cmb" style="left:833px;top:151px;width:172px;height:20px">Line (1)</div>
<div class="a" style="left:781px;top:184px;width:224px;height:155px;border:1px solid #d5dfe5;border-radius:3px"></div>
<div class="a" style="left:786px;top:177px;padding:0 2px;background:#f0f0f0;font-size:12px">General</div>
<div class="lbl" style="right:191px;top:200px">Layer:</div>
<div class="lbl" style="right:191px;top:223px">Color:</div>
<div class="lbl" style="right:191px;top:247px">Lineweight:</div>
<div class="lbl" style="right:191px;top:271px">Linetype:</div>
<div class="lbl" style="right:191px;top:295px">Draw Order:</div>
<div class="lbl" style="right:191px;top:317px">Handle:</div>
<div class="cmb" style="left:857px;top:197px;width:113px;height:20px">construction</div>
<svg class="a" style="left:979px;top:201px" width="12" height="12" viewBox="0 0 12 12"><path d="M6 1V11M1 6H11" stroke="#d01010" stroke-width="2.2"/></svg>
<div class="cmb" style="left:857px;top:220px;width:138px;height:21px"><span class="a" style="left:3px;top:5px;width:31px;height:10px;background:#fff;border:1px solid #000"></span><span class="a" style="left:36px;top:2px">By Layer</span></div>
<div class="cmb" style="left:857px;top:244px;width:138px;height:21px"><span class="a" style="left:3px;top:9px;width:31px;height:1px;background:#000"></span><span class="a" style="left:36px;top:2px">By Layer</span></div>
<div class="cmb" style="left:857px;top:268px;width:138px;height:21px"><span class="a" style="left:36px;top:2px">By Layer</span></div>
<div class="inp" style="left:857px;top:292px;width:138px;height:19px">30</div>
<div class="inp ro" style="left:857px;top:314px;width:138px;height:19px">0x70</div>
<div class="a" style="left:781px;top:354px;width:224px;height:170px;border:1px solid #d5dfe5;border-radius:3px"></div>
<div class="a" style="left:786px;top:347px;padding:0 2px;background:#f0f0f0;font-size:12px">Geometry</div>
<div class="lbl" style="right:214px;top:372px">Length:</div>
<div class="inp" style="left:833px;top:369px;width:162px;height:19px">120</div>
<div class="lbl" style="right:214px;top:396px">Angle:</div>
<div class="inp" style="left:833px;top:393px;width:162px;height:19px">0</div>
<div class="lbl" style="right:214px;top:437px">X:</div>
<div class="inp" style="left:833px;top:434px;width:162px;height:19px">0</div>
<div class="lbl" style="right:214px;top:462px">Y:</div>
<div class="inp" style="left:833px;top:459px;width:162px;height:19px">36.82</div>
<div class="lbl" style="right:214px;top:502px">X:</div>
<div class="inp" style="left:833px;top:499px;width:162px;height:19px">120</div>
<div class="a nw" style="left:790px;top:417px;font-weight:bold;font-size:12px;letter-spacing:-0.2px">Start Point</div>
<div class="a nw" style="left:790px;top:482px;font-weight:bold;font-size:12px;letter-spacing:-0.3px">End Point</div>
<div class="a" style="left:771px;top:512px;width:244px;height:6px;background:#f0f0f0"></div>
<div class="a" style="left:770px;top:512px;width:262px;height:1px;background:#a0a0a0"></div>
<div class="a" style="left:770px;top:518px;width:262px;height:18px;background:linear-gradient(#e2e2e2,#d6d6d6);border:1px solid #b4b4b4"></div><div class="a t11 sx" style="left:772px;top:521px;font-size:12px;transform:scaleX(.9)">Layer List</div><svg class="a" style="left:1001px;top:521px" width="30" height="12" viewBox="0 0 30 12"><path d="M3.5 4.5h6v6h-6zM5.5 2.5h6v6" fill="none" stroke="#000"/><path d="M3.5 4.5h6v1.5h-6zM5.5 2.5h6v1.5" fill="#000"/><path d="M17 2L25 10M25 2L17 10" stroke="#000" stroke-width="1.5"/></svg>
<div class="a" style="left:771px;top:540px;width:50px;height:20px;border:1px solid #8a8a8a;border-radius:3px;background:linear-gradient(#f6f6f6,#efefef 48%,#e0e0e0 52%,#d8d8d8)"></div>
<div class="a" style="left:823px;top:540px;width:50px;height:20px;border:1px solid #8a8a8a;border-radius:3px;background:linear-gradient(#f6f6f6,#efefef 48%,#e0e0e0 52%,#d8d8d8)"></div>
<div class="a" style="left:876px;top:540px;width:50px;height:20px;border:1px solid #8a8a8a;border-radius:3px;background:linear-gradient(#f6f6f6,#efefef 48%,#e0e0e0 52%,#d8d8d8)"></div>
<div class="a" style="left:928px;top:540px;width:50px;height:20px;border:1px solid #c0c0c0;border-radius:3px;background:#f4f4f4"></div>
<div class="a" style="left:981px;top:540px;width:50px;height:20px;border:1px solid #8a8a8a;border-radius:3px;background:linear-gradient(#f6f6f6,#efefef 48%,#e0e0e0 52%,#d8d8d8)"></div>
<svg class="a" style="left:788px;top:543px" width="17" height="14" viewBox="0 0 17 14"><path d="M0.3 5.5C2 1 12.5 -0.5 15.8 4.8C15 9 11 11.8 7.8 11.8C4.5 11.8 1.5 9.2 0.3 5.5Z" fill="#000"/><path d="M2.2 6.6C4 2.6 12 2.4 14.2 6.4C12.4 10.4 4.2 10.8 2.2 6.6Z" fill="#fff"/><circle cx="8.8" cy="6.4" r="2.9" fill="#000"/><path d="M7.6 4.8V6.4" stroke="#fff" stroke-width=".7" opacity=".8"/></svg>
<svg class="a" style="left:840px;top:543px" width="17" height="14" viewBox="0 0 17 14"><path d="M0.3 5.5C2 1 12.5 -0.5 15.8 4.8C15 9 11 11.8 7.8 11.8C4.5 11.8 1.5 9.2 0.3 5.5Z" fill="#a8a8a8"/><path d="M2.2 6.6C4 2.6 12 2.4 14.2 6.4C12.4 10.4 4.2 10.8 2.2 6.6Z" fill="#fff"/><circle cx="8.8" cy="6.4" r="2.9" fill="#a8a8a8"/><path d="M7.6 4.8V6.4" stroke="#fff" stroke-width=".7" opacity=".8"/></svg>
<svg class="a" style="left:893px;top:543px" width="16" height="14" viewBox="0 0 16 14"><path d="M8 1V13M2 7H14" stroke="#d01010" stroke-width="2.6"/></svg>
<svg class="a" style="left:945px;top:543px" width="16" height="14" viewBox="0 0 16 14"><path d="M3 7H13" stroke="#a0a0a0" stroke-width="2.4"/></svg>
<svg class="a" style="left:998px;top:541px" width="18" height="18" viewBox="0 0 18 18"><path d="M3 16L14 4" stroke="#8a5a10" stroke-width="4"/><path d="M3 16L14 4" stroke="#f0b830" stroke-width="2.4"/><path d="M14 4L16 2" stroke="#d04040" stroke-width="3"/></svg>
<div class="a" style="left:770px;top:561px;width:262px;height:194px;background:#fff;border:1px solid #828790"></div>
<div class="a" style="left:772px;top:563px;width:257px;height:18px;border:1px solid #d9d9d9;border-radius:2px;background:linear-gradient(#fafafa,#ebebeb)"></div>
<div class="a nw" style="left:813px;top:566px;font-size:12px">0</div>
<svg class="a" style="left:775px;top:566px" width="17" height="14" viewBox="0 0 17 14"><path d="M0.3 5.5C2 1 12.5 -0.5 15.8 4.8C15 9 11 11.8 7.8 11.8C4.5 11.8 1.5 9.2 0.3 5.5Z" fill="#1f3a5a"/><path d="M2.2 6.6C4 2.6 12 2.4 14.2 6.4C12.4 10.4 4.2 10.8 2.2 6.6Z" fill="#fff"/><circle cx="8.8" cy="6.4" r="2.9" fill="#1f3a5a"/><path d="M7.6 4.8V6.4" stroke="#fff" stroke-width=".7" opacity=".8"/></svg>
<svg class="a" style="left:795px;top:565px" width="12" height="16" viewBox="0 0 12 16"><path d="M2.3 7V4.3C2.3 0.6 8.7 0.6 8.7 4.3V7" fill="none" stroke="#8aa8c8" stroke-width="1.5"/><rect x="1" y="6.5" width="9" height="7.5" fill="#8aa8c8"/></svg>
<div class="a nw" style="left:813px;top:584px;font-size:12px">axes</div>
<svg class="a" style="left:775px;top:584px" width="17" height="14" viewBox="0 0 17 14"><path d="M0.3 5.5C2 1 12.5 -0.5 15.8 4.8C15 9 11 11.8 7.8 11.8C4.5 11.8 1.5 9.2 0.3 5.5Z" fill="#000"/><path d="M2.2 6.6C4 2.6 12 2.4 14.2 6.4C12.4 10.4 4.2 10.8 2.2 6.6Z" fill="#fff"/><circle cx="8.8" cy="6.4" r="2.9" fill="#000"/><path d="M7.6 4.8V6.4" stroke="#fff" stroke-width=".7" opacity=".8"/></svg>
<svg class="a" style="left:795px;top:583px" width="12" height="16" viewBox="0 0 12 16"><path d="M2.3 7V4.3C2.3 0.6 8.7 0.6 8.7 4.3V7" fill="none" stroke="#a6a6a6" stroke-width="1.5"/><rect x="1" y="6.5" width="9" height="7.5" fill="#a6a6a6"/></svg>
<div class="a nw" style="left:813px;top:602px;font-size:12px">construction</div>
<svg class="a" style="left:775px;top:602px" width="17" height="14" viewBox="0 0 17 14"><path d="M0.3 5.5C2 1 12.5 -0.5 15.8 4.8C15 9 11 11.8 7.8 11.8C4.5 11.8 1.5 9.2 0.3 5.5Z" fill="#a8a8a8"/><path d="M2.2 6.6C4 2.6 12 2.4 14.2 6.4C12.4 10.4 4.2 10.8 2.2 6.6Z" fill="#fff"/><circle cx="8.8" cy="6.4" r="2.9" fill="#a8a8a8"/><path d="M7.6 4.8V6.4" stroke="#fff" stroke-width=".7" opacity=".8"/></svg>
<svg class="a" style="left:795px;top:601px" width="12" height="16" viewBox="0 0 12 16"><path d="M2.3 7V4.3C2.3 0.6 8.7 0.6 8.7 4.3V7" fill="none" stroke="#a6a6a6" stroke-width="1.5"/><rect x="1" y="6.5" width="9" height="7.5" fill="#a6a6a6"/></svg>
<div class="a nw" style="left:813px;top:620px;font-size:12px">contour</div>
<svg class="a" style="left:775px;top:620px" width="17" height="14" viewBox="0 0 17 14"><path d="M0.3 5.5C2 1 12.5 -0.5 15.8 4.8C15 9 11 11.8 7.8 11.8C4.5 11.8 1.5 9.2 0.3 5.5Z" fill="#000"/><path d="M2.2 6.6C4 2.6 12 2.4 14.2 6.4C12.4 10.4 4.2 10.8 2.2 6.6Z" fill="#fff"/><circle cx="8.8" cy="6.4" r="2.9" fill="#000"/><path d="M7.6 4.8V6.4" stroke="#fff" stroke-width=".7" opacity=".8"/></svg>
<svg class="a" style="left:795px;top:619px" width="12" height="16" viewBox="0 0 12 16"><path d="M2.3 7V4.3C2.3 0.6 8.7 0.6 8.7 4.3V7" fill="none" stroke="#a6a6a6" stroke-width="1.5"/><rect x="1" y="6.5" width="9" height="7.5" fill="#a6a6a6"/></svg>
<div class="a nw" style="left:813px;top:638px;font-size:12px">dim</div>
<svg class="a" style="left:775px;top:638px" width="17" height="14" viewBox="0 0 17 14"><path d="M0.3 5.5C2 1 12.5 -0.5 15.8 4.8C15 9 11 11.8 7.8 11.8C4.5 11.8 1.5 9.2 0.3 5.5Z" fill="#000"/><path d="M2.2 6.6C4 2.6 12 2.4 14.2 6.4C12.4 10.4 4.2 10.8 2.2 6.6Z" fill="#fff"/><circle cx="8.8" cy="6.4" r="2.9" fill="#000"/><path d="M7.6 4.8V6.4" stroke="#fff" stroke-width=".7" opacity=".8"/></svg>
<svg class="a" style="left:795px;top:637px" width="12" height="16" viewBox="0 0 12 16"><path d="M2.3 7V4.3C2.3 0.6 8.7 0.6 8.7 4.3V7" fill="none" stroke="#a6a6a6" stroke-width="1.5"/><rect x="1" y="6.5" width="9" height="7.5" fill="#a6a6a6"/></svg>
<div class="a nw" style="left:813px;top:656px;font-size:12px">hatch</div>
<svg class="a" style="left:775px;top:656px" width="17" height="14" viewBox="0 0 17 14"><path d="M0.3 5.5C2 1 12.5 -0.5 15.8 4.8C15 9 11 11.8 7.8 11.8C4.5 11.8 1.5 9.2 0.3 5.5Z" fill="#000"/><path d="M2.2 6.6C4 2.6 12 2.4 14.2 6.4C12.4 10.4 4.2 10.8 2.2 6.6Z" fill="#fff"/><circle cx="8.8" cy="6.4" r="2.9" fill="#000"/><path d="M7.6 4.8V6.4" stroke="#fff" stroke-width=".7" opacity=".8"/></svg>
<svg class="a" style="left:795px;top:655px" width="12" height="16" viewBox="0 0 12 16"><path d="M2.3 7V4.3C2.3 0.6 8.7 0.6 8.7 4.3V7" fill="none" stroke="#a6a6a6" stroke-width="1.5"/><rect x="1" y="6.5" width="9" height="7.5" fill="#a6a6a6"/></svg>
<div class="a nw" style="left:813px;top:674px;font-size:12px">hatch_border</div>
<svg class="a" style="left:775px;top:674px" width="17" height="14" viewBox="0 0 17 14"><path d="M0.3 5.5C2 1 12.5 -0.5 15.8 4.8C15 9 11 11.8 7.8 11.8C4.5 11.8 1.5 9.2 0.3 5.5Z" fill="#000"/><path d="M2.2 6.6C4 2.6 12 2.4 14.2 6.4C12.4 10.4 4.2 10.8 2.2 6.6Z" fill="#fff"/><circle cx="8.8" cy="6.4" r="2.9" fill="#000"/><path d="M7.6 4.8V6.4" stroke="#fff" stroke-width=".7" opacity=".8"/></svg>
<svg class="a" style="left:795px;top:673px" width="12" height="16" viewBox="0 0 12 16"><path d="M2.3 7V4.3C2.3 0.6 8.7 0.6 8.7 4.3V7" fill="none" stroke="#a6a6a6" stroke-width="1.5"/><rect x="1" y="6.5" width="9" height="7.5" fill="#a6a6a6"/></svg>
<div class="a" style="left:8px;top:759px;width:1024px;height:37px;background:#fff;border-left:1px solid #828790;border-right:1px solid #828790;border-bottom:1px solid #828790;overflow:hidden">
<div class="a nw sx" style="left:5px;top:-7.5px;font-size:12px;color:#0000e0;transform:scaleX(.86)"><i>Command:</i> snapauto</div>
<div class="a nw sx" style="left:5px;top:5.5px;font-size:12px;color:#0000e0;transform:scaleX(.86)"><i>Command:</i> snapauto</div>
<div class="a nw sx" style="left:5px;top:18.5px;font-size:12px;color:#0000e0;transform:scaleX(.86)"><i>Command:</i> linemenu</div>
</div>
<div class="a" style="left:1014px;top:760px;width:16px;height:35px;background:#f0f0f0"></div>
<svg class="a" style="left:1014px;top:759px" width="16" height="36" viewBox="0 0 16 36"><path d="M4 11H12L8 7Z" fill="#404040"/><path d="M4 25H12L8 29Z" fill="#404040"/><path d="M1 18.5H15" stroke="#d8d8d8"/></svg>
<div class="a" style="left:8px;top:796px;width:1024px;height:23px;background:#fff;border:1px solid #828790;border-top:none"></div>
<div class="a nw sx" style="left:9px;top:801px;font-size:12px;transform:scaleX(.85)">Command:</div>
<div class="a" style="left:8px;top:819px;width:1024px;height:37px;background:#f0f0f0"></div>
<div class="a t11" style="left:10px;top:824px">55.6638,36.4368</div>
<div class="a t11" style="left:10px;top:841px">-</div>
<div class="a t11" style="left:164px;top:824px">66.529&lt;33.2083</div>
<div class="a t11" style="left:164px;top:841px">-</div>
<div class="a" style="left:161px;top:822px;width:1px;height:32px;background:#b8b8b8"></div>
<div class="a" style="left:316px;top:822px;width:1px;height:32px;background:#b8b8b8"></div>
<div class="a" style="left:578px;top:822px;width:1px;height:32px;background:#b8b8b8"></div>
<div class="a" style="left:777px;top:822px;width:1px;height:32px;background:#b8b8b8"></div>
<div class="a" style="left:909px;top:822px;width:1px;height:32px;background:#b8b8b8"></div>
<div class="a t11" style="right:613px;top:827px;font-size:10px;letter-spacing:-0.45px">Select entity or region</div>
<div class="a t11" style="right:613px;top:839px;font-size:10px;letter-spacing:-0.45px">Move entity or reference</div>
<svg class="a" style="left:432px;top:822px" width="32" height="33" viewBox="0 0 32 33"><defs><radialGradient id="mg" cx=".45" cy=".45" r=".6"><stop offset="0" stop-color="#fff"/><stop offset=".7" stop-color="#f2f2f2"/><stop offset="1" stop-color="#c8c8c8"/></radialGradient></defs><path d="M10 1.5L12.5 5" stroke="#606060" stroke-width="1.8"/><path d="M5 7C8 3 17 2 22 7C28 13 31 24 27 28C22 32 11 32 7 27C3 22 3 11 5 7Z" fill="url(#mg)" stroke="#7a7a7a" stroke-width="1"/><ellipse cx="14" cy="11" rx="7" ry="4.5" fill="#e2e2e2"/><ellipse cx="15" cy="11.5" rx="1.8" ry="3.8" fill="#4a64d8" transform="rotate(-18 15 11.5)"/></svg>
<div class="a t11" style="left:583px;top:826px;font-size:10px;letter-spacing:-0.3px">Selected entities:</div>
<div class="a t11" style="left:583px;top:839px;font-size:10px;letter-spacing:-0.3px">1 Line on Layer "construction".</div>
<svg class="a" style="left:1020px;top:843px" width="10" height="10" viewBox="0 0 10 10"><path d="M7 8h1v1h-1zM4 8h1v1h-1zM1 8h1v1h-1zM7 5h1v1h-1zM4 5h1v1h-1zM7 2h1v1h-1z" fill="#a0a0a0"/></svg>
</body></html>
